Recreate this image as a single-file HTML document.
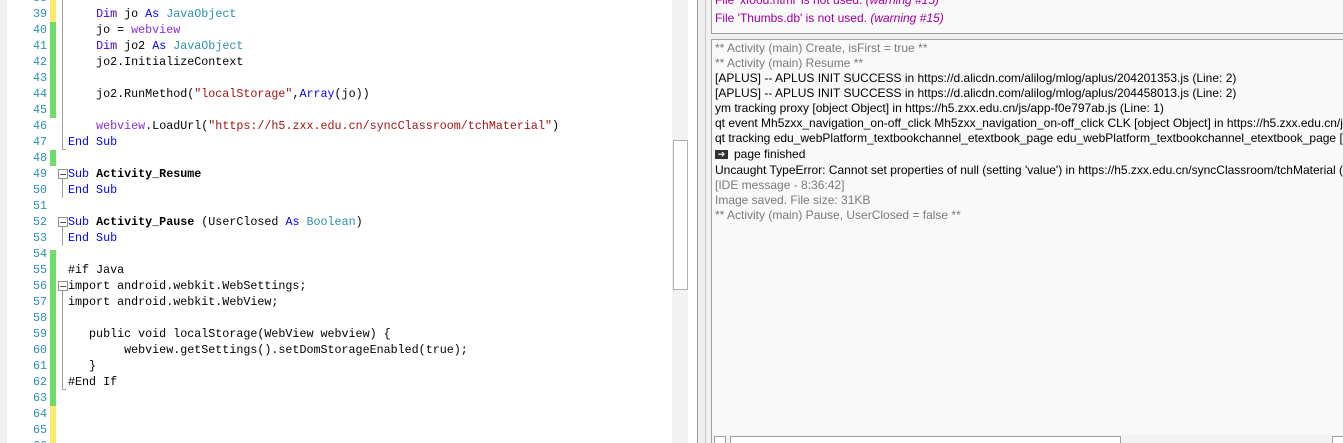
<!DOCTYPE html><html style="overflow:hidden"><head><style>
html,body{margin:0;width:1343px;height:443px;overflow:hidden}
body{background:#fff;position:relative;font-family:"Liberation Sans",sans-serif}
.g{position:absolute;left:0;top:0;width:7px;height:443px;background:#f0f0f0}
.ln{position:absolute;left:0;width:47px;text-align:right;font:11.7px "Liberation Mono",monospace;color:#2b91af}
.cb{position:absolute;left:50px;width:6px}
.c{position:absolute;left:68px;font:11.7px "Liberation Mono",monospace;color:#000;white-space:pre}
.k{color:#0000ff}.t{color:#2b91af}.d{color:#4000c8}.w{color:#8a2be2}.s{color:#a31515}
.b{font-weight:bold}
.fold{position:absolute;left:62px;width:1px;background:#a0a0a0}
.box{position:absolute;left:58px;width:8px;height:8px;border:1px solid #909090;background:#fff;font-size:0}
.box:after{content:"";position:absolute;left:1px;top:3.5px;width:6px;height:1px;background:#555}
.log{position:absolute;left:715px;font-size:12px;white-space:nowrap;line-height:15px}
.gy{color:#7a7a7a}
</style></head><body>
<div class="g"></div>
<div class="cb" style="top:0;height:22px;background:#ffe86a"></div>
<div class="cb" style="top:22px;height:96px;background:#6ddc6a"></div>
<div class="cb" style="top:150px;height:16px;background:#6ddc6a"></div>
<div class="cb" style="top:250px;height:156px;background:#6ddc6a"></div>
<div class="cb" style="top:406px;height:37px;background:#ffe86a"></div>
<div class="fold" style="top:0;height:150px"></div><div style="position:absolute;left:62px;top:149px;width:4px;height:1px;background:#a0a0a0"></div>
<div class="box" style="top:169px"></div><div class="fold" style="top:179px;height:19px"></div>
<div class="box" style="top:217px"></div><div class="fold" style="top:227px;height:19px"></div>
<div class="box" style="top:281px"></div><div class="fold" style="top:291px;height:99px"></div><div style="position:absolute;left:62px;top:389px;width:4px;height:1px;background:#a0a0a0"></div>
<div id="lines"></div>
<script>
var L=[[39,'    <span class=d>Dim</span> jo <span class=k>As</span> <span class=t>JavaObject</span>'],
[40,'    jo = <span class=w>webview</span>'],
[41,'    <span class=d>Dim</span> jo2 <span class=k>As</span> <span class=t>JavaObject</span>'],
[42,'    jo2.InitializeContext'],[43,''],
[44,'    jo2.RunMethod(<span class=s>"localStorage"</span>,<span class=k>Array</span>(jo))'],[45,''],
[46,'    <span class=w>webview</span>.LoadUrl(<span class=s>"https://h5.zxx.edu.cn/syncClassroom/tchMaterial"</span>)'],
[47,'<span class=k>End Sub</span>'],[48,''],
[49,'<span class=k>Sub</span> <span class=b>Activity_Resume</span>'],[50,'<span class=k>End Sub</span>'],[51,''],
[52,'<span class=k>Sub</span> <span class=b>Activity_Pause</span> (UserClosed <span class=k>As</span> <span class=t>Boolean</span>)'],
[53,'<span class=k>End Sub</span>'],[54,''],[55,'#if Java'],[56,'import android.webkit.WebSettings;'],
[57,'import android.webkit.WebView;'],[58,''],[59,'   public void localStorage(WebView webview) {'],
[60,'        webview.getSettings().setDomStorageEnabled(true);'],[61,'   }'],[62,'#End If'],[63,''],[64,''],[65,''],[66,'']];
var h='';L.forEach(function(l,i){var y=6+i*16;h+='<div class=ln style="top:'+(y+1)+'px">'+l[0]+'</div><div class=c style="top:'+(y+1)+'px">'+l[1]+'</div>';});
document.getElementById('lines').innerHTML=h;
</script>
<div class="ln" style="top:-9px">38</div>
<div style="position:absolute;left:672px;top:0;width:16px;height:443px;background:#f2f2f2"></div>
<div style="position:absolute;left:673px;top:140px;width:13px;height:148px;background:#fff;border:1px solid #b0b0b0"></div>
<div style="position:absolute;left:688px;top:0;width:9px;height:443px;background:#fff"></div>
<div style="position:absolute;left:697px;top:0;width:14px;height:443px;background:#f0f0f0;border-left:1px solid #a0a0a0"></div>
<div style="position:absolute;left:705px;top:0;width:1px;height:443px;background:#c8c8c8"></div>
<div style="position:absolute;left:711px;top:0;width:632px;height:33px;background:#f8f8f8;border-left:1px solid #a0a0a0;border-bottom:1px solid #a0a0a0"></div>
<div style="position:absolute;left:711px;top:34px;width:632px;height:5px;background:#f0f0f0"></div>
<div style="position:absolute;left:711px;top:39px;width:632px;height:404px;background:#f9f9f9;border-left:1px solid #a0a0a0;border-top:1px solid #a0a0a0"></div>
<div class="log" style="top:-7px;color:#a000a0">File 'xfood.html' is not used. <i>(warning #15)</i></div>
<div class="log" style="top:11px;color:#a000a0">File 'Thumbs.db' is not used. <i>(warning #15)</i></div>
<div class="log gy" style="top:41px">** Activity (main) Create, isFirst = true **</div>
<div class="log gy" style="top:56px">** Activity (main) Resume **</div>
<div class="log" style="top:71px">[APLUS] -- APLUS INIT SUCCESS in https://d.alicdn.com/alilog/mlog/aplus/204201353.js (Line: 2)</div>
<div class="log" style="top:86px">[APLUS] -- APLUS INIT SUCCESS in https://d.alicdn.com/alilog/mlog/aplus/204458013.js (Line: 2)</div>
<div class="log" style="top:101px">ym tracking proxy [object Object] in https://h5.zxx.edu.cn/js/app-f0e797ab.js (Line: 1)</div>
<div class="log" style="top:116px">qt event Mh5zxx_navigation_on-off_click Mh5zxx_navigation_on-off_click CLK [object Object] in https://h5.zxx.edu.cn/js</div>
<div class="log" style="top:131px">qt tracking edu_webPlatform_textbookchannel_etextbook_page edu_webPlatform_textbookchannel_etextbook_page [obj</div>
<div class="log" style="top:147px"><span style="display:inline-block;width:13px;height:9px;background:#333;color:#fff;font-size:9px;line-height:9px;text-align:center;vertical-align:middle;margin-right:6px">➔</span>page finished</div>
<div class="log" style="top:163px">Uncaught TypeError: Cannot set properties of null (setting 'value') in https://h5.zxx.edu.cn/syncClassroom/tchMaterial (</div>
<div class="log gy" style="top:178px">[IDE message - 8:36:42]</div>
<div class="log gy" style="top:193px">Image saved. File size: 31KB</div>
<div class="log gy" style="top:208px">** Activity (main) Pause, UserClosed = false **</div>
<div style="position:absolute;left:712px;top:435px;width:631px;height:8px;background:#f2f2f2"></div>
<div style="position:absolute;left:714px;top:436px;width:10px;height:8px;border:1px solid #a0a0a0;background:#fff"></div>
<div style="position:absolute;left:730px;top:436px;width:389px;height:8px;border:1px solid #a0a0a0;background:#fff"></div>
<div style="position:absolute;left:1332px;top:436px;width:10px;height:8px;border:1px solid #a0a0a0;background:#fff"></div>
</body></html>
